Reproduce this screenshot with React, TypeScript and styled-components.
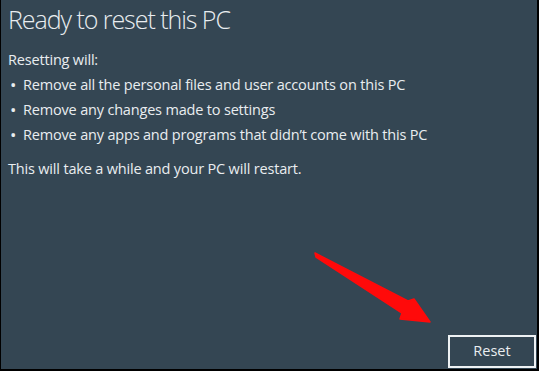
import React from "react";
import styled, { createGlobalStyle } from "styled-components";

const Global = createGlobalStyle`
  html, body { margin: 0; padding: 0; background: #000; }
  body { font-family: "Open Sans", "Noto Sans", sans-serif; }
`;

const Dialog = styled.div`
  position: relative;
  box-sizing: border-box;
  width: 539px;
  height: 371px;
  background: #344653;
  border-left: 1px solid #000;
  border-right: 2px solid #000;
  border-bottom: 2px solid #000;
  color: #e9edf0;
  display: flex;
  flex-direction: column;
  padding: 0 0 1px 7px;
`;

const Title = styled.h1`
  margin: 0;
  padding-top: 2px;
  font-size: 25px;
  font-weight: 300;
  line-height: 34px;
  letter-spacing: -1.05px;
`;

const Body = styled.div`
  margin-top: 11px;
  font-size: 14.5px;
  line-height: 25px;
  letter-spacing: -0.18px;
`;

const Para = styled.p`
  margin: 0;
`;

const List = styled.ul`
  list-style: none;
  margin: 0;
  padding: 0;
`;

const Item = styled.li`
  display: flex;
  align-items: center;
  &::before {
    content: "•";
    width: 15px;
    padding-left: 2px;
    box-sizing: border-box;
    font-size: 17px;
  }
`;

const Footnote = styled.p`
  margin: 9px 0 0;
`;

const Footer = styled.div`
  margin-top: auto;
  display: flex;
  justify-content: flex-end;
  padding-right: 1px;
`;

const Button = styled.button`
  box-sizing: border-box;
  width: 88px;
  height: 33px;
  border: 2px solid #eef2f4;
  background: transparent;
  color: #e9edf0;
  font-family: "Open Sans", "Noto Sans", sans-serif;
  font-size: 14.5px;
  padding: 0 0 2px;
`;

const Arrow = styled.svg`
  position: absolute;
  left: 0;
  top: 0;
  pointer-events: none;
`;

export default function App() {
  return (
    <>
      <Global />
      <Dialog>
        <Title>Ready to reset this PC</Title>
        <Body>
          <Para>Resetting will:</Para>
          <List>
            <Item>Remove all the personal files and user accounts on this PC</Item>
            <Item>Remove any changes made to settings</Item>
            <Item>Remove any apps and programs that didn’t come with this PC</Item>
          </List>
          <Footnote>This will take a while and your PC will restart.</Footnote>
        </Body>
        <Footer>
          <Button>Reset</Button>
        </Footer>
        <Arrow width="539" height="371" viewBox="0 0 539 371">
          <polygon
            points="314,253 407,301 413,299 429,322 399,319 401,313 315,257"
            fill="#ff0a0a"
            stroke="#ff0a0a"
            strokeWidth="1.5"
            strokeLinejoin="round"
          />
        </Arrow>
      </Dialog>
    </>
  );
}
